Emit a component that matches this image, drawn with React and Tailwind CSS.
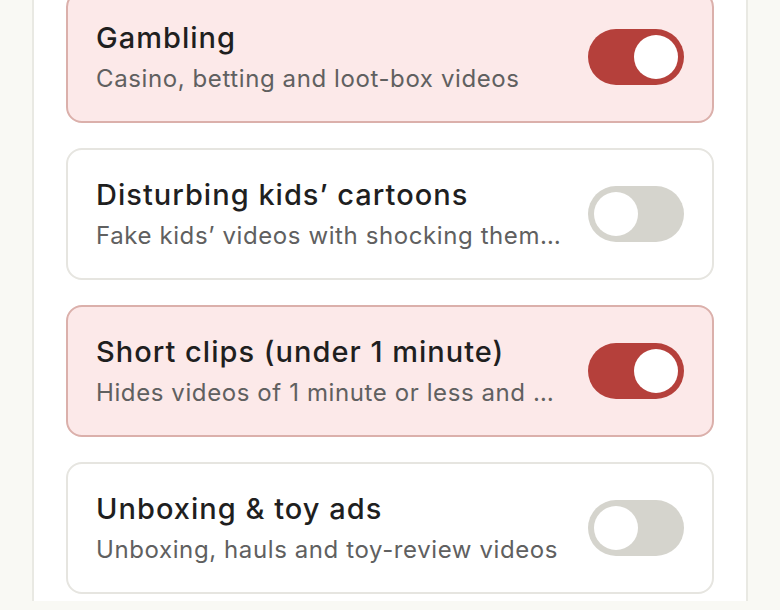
import { useState } from "react";

const FILTERS = [
  {
    id: "gambling",
    title: "Gambling",
    desc: "Casino, betting and loot-box videos",
    on: true,
  },
  {
    id: "elsagate",
    title: "Disturbing kids’ cartoons",
    desc: "Fake kids’ videos with shocking themes and characters",
    on: false,
  },
  {
    id: "shorts",
    title: "Short clips (under 1 minute)",
    desc: "Hides videos of 1 minute or less and all Shorts",
    on: true,
  },
  {
    id: "unboxing",
    title: "Unboxing & toy ads",
    desc: "Unboxing, hauls and toy-review videos",
    on: false,
  },
];

const Toggle = ({ on, onClick }) => (
  <button
    type="button"
    onClick={onClick}
    className={`flex h-[56px] w-[96px] shrink-0 items-center rounded-full p-[6px] transition-colors ${
      on ? "justify-end bg-[#b5403b]" : "justify-start bg-[#d5d4cd]"
    }`}
  >
    <span className="block h-[44px] w-[44px] rounded-full bg-white" />
  </button>
);

const App = () => {
  const [filters, setFilters] = useState(FILTERS);

  const toggle = (id) =>
    setFilters((list) =>
      list.map((f) => (f.id === id ? { ...f, on: !f.on } : f))
    );

  return (
    <div
      className="h-[610px] overflow-hidden bg-[#f9f9f4]"
      style={{ fontFamily: "Inter, 'Noto Sans', sans-serif" }}
    >
      <div className="mx-[32px] h-full border-x-2 border-[#e9e9e3] bg-white px-[32px]">
        {/* Filter list */}
        <div className="-mt-[9px] flex flex-col gap-[25px]">
          {filters.map((f) => (
            <div
              key={f.id}
              className={`flex h-[132px] items-center gap-[22px] rounded-[16px] border-2 px-[28px] ${
                f.on
                  ? "border-[#dbb0ab] bg-[#fce9e9]"
                  : "border-[#e6e5e0] bg-white"
              }`}
            >
              <div className="min-w-0 flex-1">
                <p className="truncate text-[29px] font-medium leading-[36px] tracking-[0.035em] text-[#1f1f1f]">
                  {f.title}
                </p>
                <p className="mt-[7px] truncate text-[24px] leading-[32px] tracking-[0.025em] text-[#606060]">
                  {f.desc}
                </p>
              </div>
              <Toggle on={f.on} onClick={() => toggle(f.id)} />
            </div>
          ))}
        </div>
      </div>
    </div>
  );
};

export default App;
